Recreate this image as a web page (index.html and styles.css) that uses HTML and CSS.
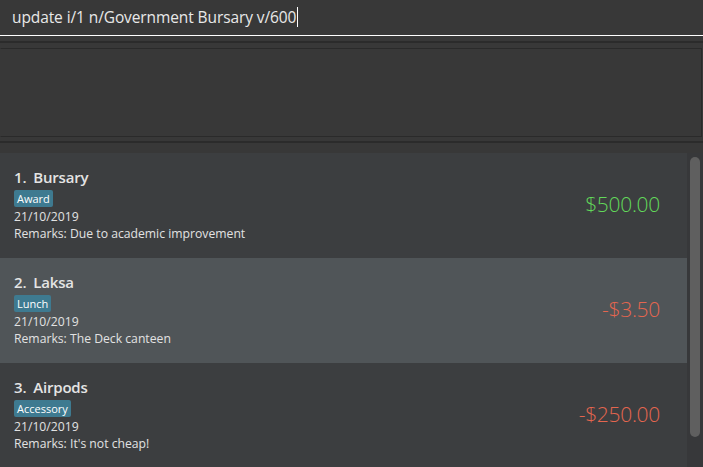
FILE: index.html
```html
<!DOCTYPE html>
<html>
<head>
<meta charset="utf-8">
<link rel="stylesheet" href="styles.css">
</head>
<body>
<div class="app">
  <div class="command">
    <span class="command-text">update i/1 n/Government Bursary v/600</span><span class="caret"></span>
  </div>
  <div class="spacer-a"></div>
  <div class="sep"></div>
  <div class="result-wrap">
    <div class="result-box"></div>
  </div>
  <div class="sep"></div>
  <div class="spacer-b"></div>
  <div class="list-area">
    <div class="list">
      <div class="card">
        <div class="info">
          <div class="title"><span class="idx">1.</span><span class="name">Bursary</span></div>
          <div class="tags"><span class="tag">Award</span></div>
          <div class="line">21/10/2019</div>
          <div class="line">Remarks: Due to academic improvement</div>
        </div>
        <div class="amount income">$500.00</div>
      </div>
      <div class="card alt">
        <div class="info">
          <div class="title"><span class="idx">2.</span><span class="name">Laksa</span></div>
          <div class="tags"><span class="tag">Lunch</span></div>
          <div class="line">21/10/2019</div>
          <div class="line">Remarks: The Deck canteen</div>
        </div>
        <div class="amount expense">-$3.50</div>
      </div>
      <div class="card">
        <div class="info">
          <div class="title"><span class="idx">3.</span><span class="name">Airpods</span></div>
          <div class="tags"><span class="tag">Accessory</span></div>
          <div class="line">21/10/2019</div>
          <div class="line">Remarks: It's not cheap!</div>
        </div>
        <div class="amount expense">-$250.00</div>
      </div>
    </div>
    <div class="scrollbar"><div class="thumb"></div></div>
  </div>
</div>
</body>
</html>
```
FILE: styles.css
```css
html, body {
  margin: 0;
  padding: 0;
  background: #383838;
  width: 703px;
  height: 467px;
  overflow: hidden;
  font-family: "Open Sans", "Noto Sans", sans-serif;
}
.app {
  display: flex;
  flex-direction: column;
  width: 703px;
  height: 467px;
}
.command {
  height: 35px;
  border-bottom: 1px solid #ffffff;
  display: flex;
  align-items: center;
  padding-left: 12px;
  box-sizing: content-box;
  background: #383838;
}
.command-text {
  color: #e8e8e8;
  font-size: 15.5px;
  letter-spacing: -0.1px;
  line-height: 20px;
  padding-bottom: 2px;
}
.caret {
  display: inline-block;
  width: 1px;
  height: 20px;
  background: #ffffff;
  margin-left: 1px;
  margin-bottom: 2px;
}
.spacer-a { height: 5px; }
.sep {
  height: 2px;
  background: #2b2b2b;
}
.result-wrap {
  padding: 5px 1px 4px 0;
}
.result-box {
  height: 87px;
  border: 1px solid #2a2a2a;
  border-left-color: #383838;
  background: #383838;
}
.spacer-b { height: 10px; }
.list-area {
  flex: 1;
  display: flex;
  min-height: 0;
}
.list {
  width: 687px;
  display: flex;
  flex-direction: column;
}
.card {
  height: 105px;
  flex: none;
  box-sizing: border-box;
  background: #3c3e40;
  display: flex;
  align-items: center;
  padding: 0 27px 0 14px;
}
.card.alt { background: #505558; }
.info {
  flex: 1;
  align-self: flex-start;
  padding-top: 14px;
}
.title {
  font-size: 15px;
  font-weight: 600;
  color: #e4e4e4;
  line-height: 20px;
  height: 20px;
  letter-spacing: -0.2px;
}
.idx { margin-right: 7px; }
.tags {
  margin-top: 3px;
  height: 17px;
  display: flex;
}
.tag {
  background: #3e7a90;
  color: #ffffff;
  font-size: 11px;
  line-height: 17px;
  padding: 0 3px;
  border-radius: 2px;
}
.line {
  font-size: 12.2px;
  line-height: 17px;
  color: #e2e2e2;
  margin-top: 0.5px;
}
.amount {
  font-size: 21px;
  font-weight: 300;
  margin-top: -4px;
  letter-spacing: -0.3px;
}
.income { color: #62d95a; }
.expense { color: #e5664f; }
.scrollbar {
  width: 16px;
  background: #37383a;
  padding: 4px 3px 0 3px;
  box-sizing: border-box;
}
.thumb {
  height: 280px;
  background: #5f5f5f;
  border-radius: 5px;
}
```
